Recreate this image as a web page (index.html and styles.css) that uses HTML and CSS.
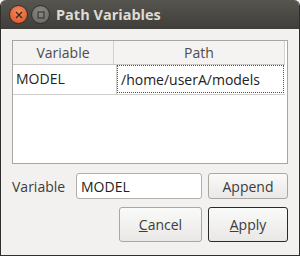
FILE: index.html
```html
<!DOCTYPE html>
<html lang="en">
<head>
    <meta charset="UTF-8">
    <title>Path Variables</title>
    <link rel="stylesheet" href="styles.css">
</head>
<body>
    <div class="window">
        <div class="titlebar">
            <span class="tb-btn close">
                <svg width="8" height="8" viewBox="0 0 8 8"><path d="M1 1L7 7M7 1L1 7" stroke="#3a2a22" stroke-width="1.4"/></svg>
            </span>
            <span class="tb-btn max">
                <svg width="8" height="8" viewBox="0 0 8 8"><rect x="1" y="1" width="6" height="6" fill="none" stroke="#3a3a38" stroke-width="1.2"/></svg>
            </span>
            <span class="title">Path Variables</span>
        </div>

        <div class="content">
            <div class="table">
                <div class="thead">
                    <div class="th col-var">Variable</div>
                    <div class="th col-path">Path</div>
                </div>
                <div class="row">
                    <div class="td col-var">MODEL</div>
                    <div class="td col-path focus">/home/userA/models</div>
                </div>
            </div>

            <div class="edit-row">
                <label for="varname">Variable</label>
                <input type="text" id="varname" value="MODEL">
                <button class="btn">Append</button>
            </div>

            <div class="actions">
                <button class="btn wide"><u>C</u>ancel</button>
                <button class="btn wide default"><u>A</u>pply</button>
            </div>
        </div>
    </div>
</body>
</html>
```

FILE: styles.css
```css
body {
    margin: 0;
    background: #f2f1f0;
    font-family: "Open Sans", "DejaVu Sans", sans-serif;
    font-size: 14px;
    color: #3c3c3c;
}
.window {
    width: 300px;
    height: 256px;
    box-sizing: border-box;
    border: 1px solid #2f2e2b;
    border-top: none;
    border-radius: 6px 6px 0 0;
    overflow: hidden;
    background: #f2f1f0;
}
.titlebar {
    height: 29px;
    background: linear-gradient(#57554f, #3f3e3a);
    display: flex;
    align-items: center;
    padding-left: 8px;
    gap: 3px;
}
.tb-btn {
    width: 17px;
    height: 17px;
    border-radius: 50%;
    display: flex;
    align-items: center;
    justify-content: center;
}
.close {
    background: radial-gradient(circle at 50% 35%, #f38a5c, #e0501f);
    border: 1px solid #3a302a;
}
.max {
    background: radial-gradient(circle at 50% 35%, #8a8983, #65645f);
    border: 1px solid #33322f;
}
.title {
    margin-left: 3px;
    color: #dfdbd2;
    font-weight: bold;
    font-size: 14.5px;
}
.content {
    padding: 11px 11px 0 11px;
}
.table {
    border: 1px solid #a8a6a2;
    height: 122px;
    background: #fff;
    padding: 0 2px 0 0;
}
.thead {
    display: flex;
    height: 23px;
    background: #f4f3f2;
    border-bottom: 1px solid #c8c6c2;
}
.th {
    text-align: center;
    line-height: 23px;
    color: #4c4c4c;
    border-right: 1px solid #d4d2ce;
}
.col-var {
    width: 100px;
    flex: none;
}
.col-path {
    flex: 1;
}
.row {
    display: flex;
    height: 29px;
    border-bottom: 1px solid #cfcdc9;
}
.td {
    line-height: 27px;
    padding-left: 3px;
    color: #222;
}
.td.col-var {
    border-right: 1px solid #cfcdc9;
}
.focus {
    border: 1px dotted #555;
    margin: 0 1px 1px 0;
}
.edit-row {
    display: flex;
    align-items: center;
    margin-top: 9px;
    height: 26px;
}
.edit-row label {
    width: 64px;
    color: #3c3c3c;
}
.edit-row input {
    width: 126px;
    height: 26px;
    box-sizing: border-box;
    border: 1px solid #b0aea9;
    border-radius: 3px;
    padding: 0 4px;
    font: inherit;
    color: #222;
    background: #fff;
}
.btn {
    font: inherit;
    color: #3c3c3c;
    height: 26px;
    width: 80px;
    margin-left: 6px;
    border: 1px solid #a9a7a2;
    border-radius: 3px;
    background: linear-gradient(#fafaf9, #e9e8e6);
    padding: 0;
}
.actions {
    display: flex;
    justify-content: flex-end;
    margin-top: 8px;
}
.btn.wide {
    height: 35px;
    width: 83px;
}
.btn.default {
    width: 80px;
    border-color: #2a2a2a;
}
```
